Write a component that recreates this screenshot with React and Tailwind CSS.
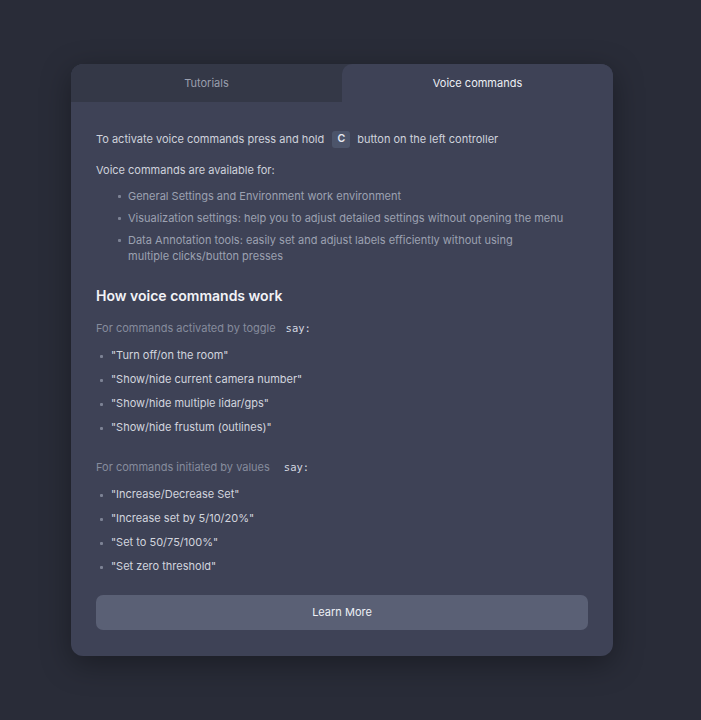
import React from "react";

const Dot = ({ left }) => (
  <span className={`inline-block w-[3px] h-[3px] bg-[#7c8294] rounded-[1px] shrink-0 ${left}`} />
);

export default function App() {
  const toggleItems = [
    '"Turn off/on the room"',
    '"Show/hide current camera number"',
    '"Show/hide multiple lidar/gps"',
    '"Show/hide frustum (outlines)"',
  ];
  const valueItems = [
    '"Increase/Decrease Set"',
    '"Increase set by 5/10/20%"',
    '"Set to 50/75/100%"',
    '"Set zero threshold"',
  ];
  return (
    <div
      className="min-h-[720px] w-full bg-[#292c38] pt-[64px] pl-[71px]"
      style={{ fontFamily: "Inter, 'Noto Sans', sans-serif" }}
    >
      <div className="w-[542px] h-[592px] bg-[#3e4256] rounded-[12px] overflow-hidden shadow-[0_8px_30px_rgba(0,0,0,0.35)] flex flex-col">
        <div className="flex h-[38px] bg-[#343847]">
          <div className="w-[271px] flex items-center justify-center text-[11px] text-[#9a9fae]">
            Tutorials
          </div>
          <div className="flex-1 flex items-center justify-center text-[11px] text-[#eceef4] bg-[#3e4256] rounded-t-[10px]">
            Voice commands
          </div>
        </div>
        <div className="px-[25px] pt-[26px] flex flex-col">
          <div className="flex items-center text-[11px] text-[#cfd2dc] h-[22px]">
            <span>To activate voice commands press and hold</span>
            <span className="ml-[8px] mr-[7px] w-[18px] h-[17px] rounded-[3px] bg-[#4c546a] flex items-center justify-center text-[10.5px] font-semibold text-[#e6e9f0]">
              C
            </span>
            <span>button on the left controller</span>
          </div>
          <div className="mt-[12px] text-[11px] text-[#cfd2dc] leading-[16px]">
            Voice commands are available for:
          </div>
          <ul className="mt-[10px] pl-[22px] text-[11px] text-[#9ca1b1] leading-[16px] flex flex-col gap-[6px]">
            <li className="flex items-start gap-[7px]">
              <Dot left="mt-[7px]" />
              <span>General Settings and Environment work environment</span>
            </li>
            <li className="flex items-start gap-[7px]">
              <Dot left="mt-[7px]" />
              <span>Visualization settings: help you to adjust detailed settings without opening the menu</span>
            </li>
            <li className="flex items-start gap-[7px]">
              <Dot left="mt-[7px]" />
              <span className="w-[385px]">
                Data Annotation tools: easily set and adjust labels efficiently without using multiple clicks/button presses
              </span>
            </li>
          </ul>
          <h2 className="mt-[22px] text-[14px] font-semibold text-[#f2f3f7] leading-[20px]">
            How voice commands work
          </h2>
          <div className="mt-[14px] text-[11px] text-[#868c9d] leading-[16px] flex items-center">
            <span>For commands activated by toggle</span>
            <span className="ml-[10px] text-[10.5px] text-[#d4d7e0] font-medium" style={{ fontFamily: "'DejaVu Sans Mono', monospace" }}>
              say:
            </span>
          </div>
          <ul className="mt-[11px] text-[11px] text-[#d2d5de] leading-[16px] flex flex-col gap-[8px]">
            {toggleItems.map((t) => (
              <li key={t} className="flex items-center gap-[8px] pl-[4px]">
                <Dot left="mt-[2px]" />
                <span>{t}</span>
              </li>
            ))}
          </ul>
          <div className="mt-[24px] text-[11px] text-[#868c9d] leading-[16px] flex items-center">
            <span>For commands initiated by values</span>
            <span className="ml-[14px] text-[10.5px] text-[#d4d7e0] font-medium" style={{ fontFamily: "'DejaVu Sans Mono', monospace" }}>
              say:
            </span>
          </div>
          <ul className="mt-[11px] text-[11px] text-[#d2d5de] leading-[16px] flex flex-col gap-[8px]">
            {valueItems.map((t) => (
              <li key={t} className="flex items-center gap-[8px] pl-[4px]">
                <Dot left="mt-[2px]" />
                <span>{t}</span>
              </li>
            ))}
          </ul>
          <button className="mt-[21px] h-[35px] w-full rounded-[7px] bg-[#5a6075] text-[11px] text-[#eef0f5] flex items-center justify-center">
            Learn More
          </button>
        </div>
      </div>
    </div>
  );
}
